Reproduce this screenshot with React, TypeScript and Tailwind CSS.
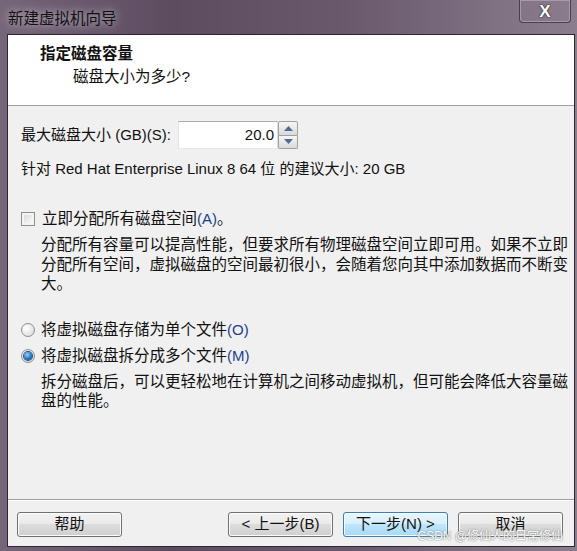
const font = { fontFamily: '"Liberation Sans", "Noto Sans CJK SC", sans-serif' };

function Button({ label, focused }: { label: string; focused?: boolean }) {
  return (
    <div
      className={
        "w-[105px] h-[25px] rounded-[3px] border flex items-center justify-center text-[15px] text-[#111] " +
        (focused
          ? "border-[#3c7fb1] bg-[linear-gradient(#eaf6fd_0%,#d9f0fc_45%,#bee6fd_50%,#a7d9f5_100%)] shadow-[inset_0_0_0_1px_#f4fbff]"
          : "border-[#707070] bg-[linear-gradient(#f2f2f2_0%,#ebebeb_45%,#dddddd_50%,#cfcfcf_100%)] shadow-[inset_0_0_0_1px_#fcfcfc]")
      }
    >
      {label}
    </div>
  );
}

function Radio({ checked }: { checked?: boolean }) {
  return (
    <div className="w-[14px] h-[14px] rounded-full border border-[#8e8f8f] bg-[radial-gradient(circle_at_35%_35%,#ffffff,#d4d4d4)] flex items-center justify-center">
      {checked && (
        <div className="w-[8px] h-[8px] rounded-full bg-[radial-gradient(circle_at_40%_35%,#9fd3f7,#1a6fb5_60%,#0e3f73)] shadow-[0_0_0_1px_#1c4e80]" />
      )}
    </div>
  );
}

export default function App() {
  return (
    <div
      className="w-[577px] h-[551px] flex flex-col bg-[linear-gradient(90deg,#76667a_0%,#5d4b60_30%,#6a596d_60%,#8b7d8e_100%)]"
      style={font}
    >
      {/* Title bar */}
      <div className="h-[34px] flex items-start relative">
        <div className="pl-[8px] pt-[7px] text-[15.5px] text-[#111] [text-shadow:0_0_8px_#d8d0da]">新建虚拟机向导</div>
        <div className="absolute right-[6px] top-0 w-[52px] h-[23px] rounded-b-[4px] border border-t-0 border-[#4a3d4c] shadow-[inset_0_0_0_1px_#a898aa] flex items-center justify-center">
          <span className="text-white font-bold text-[17px] leading-none [text-shadow:0_0_2px_#333,0_0_1px_#000]">X</span>
        </div>
      </div>

      {/* Client area */}
      <div className="flex-1 ml-[7px] mr-[2px] mb-[4px] border border-[#2e2630] flex flex-col bg-[#f0f0f0] text-[15px] text-[#111]">
        {/* Header */}
        <div className="h-[71px] bg-white border-b border-[#a0a0a0] pt-[9px] text-[15.5px]">
          <div className="pl-[32px] font-bold leading-[20px]">指定磁盘容量</div>
          <div className="pl-[65px] mt-[3px] leading-[20px]">磁盘大小为多少?</div>
        </div>

        {/* Body */}
        <div className="flex-1 pl-[13px] pt-[15px] border-b border-[#a0a0a0]">
          <div className="flex items-center h-[28px]">
            <span className="w-[157px] whitespace-nowrap">最大磁盘大小 (GB)(S):</span>
            <div className="w-[100px] h-[28px] bg-white border border-[#abadb3] border-l-[#e2e3ea] border-r-[#dbdfe6] border-b-[#e3e9ef] flex items-center justify-end pr-[3px]">
              20.0
            </div>
            <div className="w-[20px] h-[28px] flex flex-col">
              <div className="flex-1 border border-[#a0a0a0] rounded-t-[2px] bg-[linear-gradient(#f6f6f6,#dadada)] flex items-center justify-center">
                <svg width="9" height="5" viewBox="0 0 9 5">
                  <path d="M0 5 L4.5 0 L9 5 Z" fill="#4e6a96" />
                </svg>
              </div>
              <div className="flex-1 border border-t-0 border-[#a0a0a0] rounded-b-[2px] bg-[linear-gradient(#f6f6f6,#dadada)] flex items-center justify-center">
                <svg width="9" height="5" viewBox="0 0 9 5">
                  <path d="M0 0 L4.5 5 L9 0 Z" fill="#4e6a96" />
                </svg>
              </div>
            </div>
          </div>

          <div className="mt-[10px] leading-[20px] whitespace-nowrap">针对 Red Hat Enterprise Linux 8 64 位 的建议大小: 20 GB</div>

          <div className="mt-[30px] flex items-center h-[20px] gap-[7px]">
            <div className="w-[14px] h-[14px] border border-[#8e8f8f] bg-[linear-gradient(135deg,#d4d4d4,#ffffff)] shadow-[inset_0_0_0_2px_#f4f4f4]" />
            <span className="text-[15.5px]">
              立即分配所有磁盘空间<span className="text-[#1b3f8f] text-[15px]">(A)</span>。
            </span>
          </div>
          <p className="mt-[6px] ml-[20px] leading-[19.5px] text-[15.5px] whitespace-nowrap">
            分配所有容量可以提高性能，但要求所有物理磁盘空间立即可用。如果不立即
            <br />
            分配所有空间，虚拟磁盘的空间最初很小，会随着您向其中添加数据而不断变
            <br />
            大。
          </p>

          <div className="mt-[26px] flex items-center h-[20px] gap-[6px]">
            <Radio />
            <span className="text-[15.5px]">
              将虚拟磁盘存储为单个文件<span className="text-[#1b3f8f] text-[15px]">(O)</span>
            </span>
          </div>
          <div className="mt-[6px] flex items-center h-[20px] gap-[6px]">
            <Radio checked />
            <span className="text-[15.5px]">
              将虚拟磁盘拆分成多个文件<span className="text-[#1b3f8f] text-[15px]">(M)</span>
            </span>
          </div>
          <p className="mt-[6px] ml-[20px] leading-[19.5px] text-[15.5px] whitespace-nowrap">
            拆分磁盘后，可以更轻松地在计算机之间移动虚拟机，但可能会降低大容量磁
            <br />
            盘的性能。
          </p>
        </div>

        {/* Footer */}
        <div className="h-[46px] border-t border-white flex items-start pt-[11px] pl-[9px] pr-[11px] relative">
          <Button label="帮助" />
          <div className="ml-auto flex gap-[10px]">
            <Button label="< 上一步(B)" />
            <Button label="下一步(N) >" focused />
            <Button label="取消" />
          </div>
          <span className="absolute right-[11px] bottom-[1px] text-[12px] text-white [text-shadow:0_0_1px_#777,0_0_2px_#999]">
            CSDN @修仙人的日常修仙
          </span>
        </div>
      </div>
    </div>
  );
}
